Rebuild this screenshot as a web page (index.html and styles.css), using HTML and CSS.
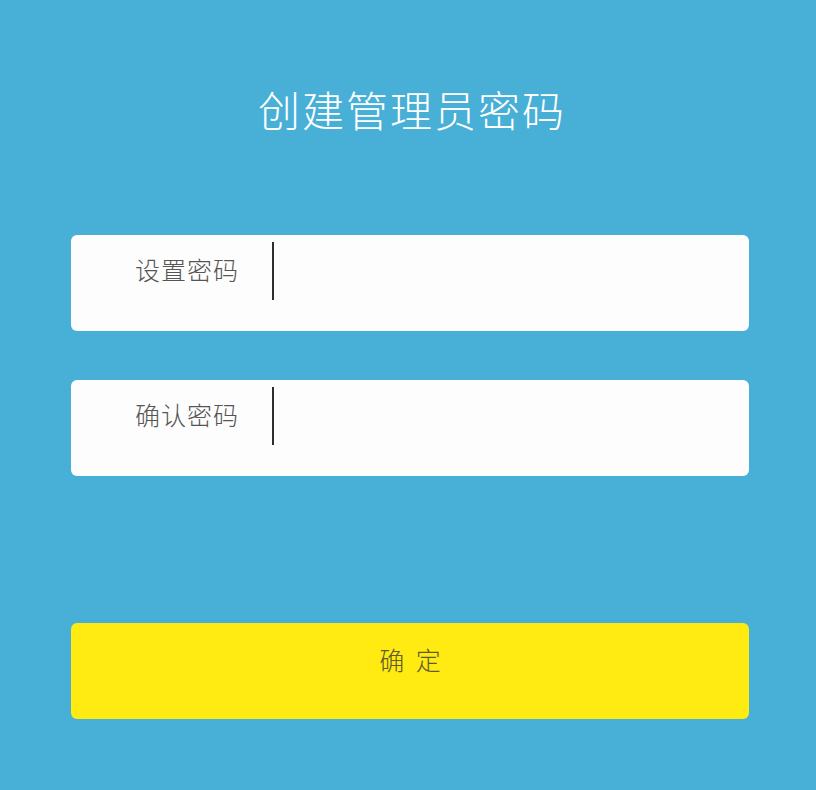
FILE: index.html
```html
<!DOCTYPE html>
<html lang="zh-CN">
<head>
<meta charset="utf-8">
<title>创建管理员密码</title>
<link rel="stylesheet" href="styles.css">
</head>
<body>
<main class="setup">
  <h1 class="setup-title">创建管理员密码</h1>
  <form class="setup-form">
    <label class="field">
      <span class="field-label">设置密码</span>
      <span class="field-caret"></span>
    </label>
    <label class="field">
      <span class="field-label">确认密码</span>
      <span class="field-caret"></span>
    </label>
    <button type="button" class="submit">确 定</button>
  </form>
</main>
</body>
</html>
```
FILE: styles.css
```css
html, body {
  margin: 0;
  padding: 0;
}

body {
  width: 816px;
  height: 790px;
  background: #48afd7;
  font-family: "Noto Sans CJK SC", "Noto Sans", sans-serif;
  overflow: hidden;
}

.setup {
  padding: 0 67px 0 71px;
}

.setup-title {
  margin: 0;
  padding-top: 83px;
  height: 52px;
  font-size: 42px;
  line-height: 52px;
  font-weight: 300;
  color: #ffffff;
  text-align: center;
  letter-spacing: 2px;
  padding-left: 4px;
}

.setup-form {
  margin-top: 100px;
  display: flex;
  flex-direction: column;
}

.field {
  display: flex;
  align-items: flex-start;
  height: 96px;
  background: #fdfdfd;
  border-radius: 6px;
  margin-bottom: 49px;
  box-sizing: border-box;
}

.field + .field {
  margin-bottom: 147px;
}

.field-label {
  margin: 17px 0 0 64px;
  font-size: 25px;
  line-height: 34px;
  font-weight: 300;
  color: #555555;
  letter-spacing: 1px;
}

.field-caret {
  width: 2px;
  height: 58px;
  margin: 7px 0 0 33px;
  background: #2e2e2e;
}

.submit {
  height: 96px;
  border: 0;
  border-radius: 6px;
  background: #ffea12;
  font-family: inherit;
  font-size: 25px;
  font-weight: 300;
  color: #5d5a2e;
  letter-spacing: 3px;
  padding: 0 0 24px 3px;
}
```
